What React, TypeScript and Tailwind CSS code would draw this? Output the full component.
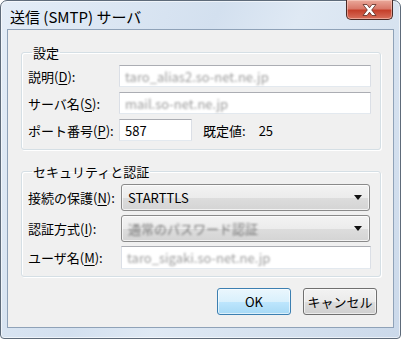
import React from 'react';

function Key({ text, k }: { text: string; k: string }) {
  return (
    <span className="whitespace-nowrap">
      {text}(<span className="underline underline-offset-[2px]">{k}</span>):
    </span>
  );
}

function TextBox({ value, width, height = 'h-[22px]', blur = true }: { value: string; width: string; height?: string; blur?: boolean }) {
  return (
    <div
      className={`${width} ${height} flex items-center bg-white border border-t-[#abadb3] border-x-[#dbdfe6] border-b-[#e3e9ef] px-[5px]`}
    >
      <span className={blur ? 'text-[#9c9c9c] blur-[1.1px] whitespace-nowrap' : 'text-black whitespace-nowrap'}>{value}</span>
    </div>
  );
}

function ComboBox({ value, blur = false }: { value: string; blur?: boolean }) {
  return (
    <div className="w-[249px] h-[27px] flex items-center justify-between rounded-[3px] border border-[#8a8a8a] bg-[linear-gradient(#f3f3f3_0%,#ececec_50%,#dddddd_51%,#d4d4d4_100%)] shadow-[inset_0_0_0_1px_rgba(255,255,255,0.7)] pl-[6px] pr-[7px]">
      <span className={blur ? 'text-[#7a7a7a] blur-[1.1px] whitespace-nowrap' : 'text-black whitespace-nowrap'}>{value}</span>
      <svg width="8" height="5" viewBox="0 0 8 5">
        <path d="M0 0 H8 L4 5 Z" fill="#111" />
      </svg>
    </div>
  );
}

export default function App() {
  return (
    <div className="w-[401px] h-[339px] bg-white font-['Noto_Sans_CJK_JP',sans-serif] text-[13px] text-black leading-none">
      <div className="w-[401px] h-[339px] flex flex-col rounded-t-[7px] rounded-b-[4px] border border-[#5e6b7a] bg-[linear-gradient(115deg,#e4edf7_0%,#d3e0ef_40%,#dfe9f4_55%,#cbd9ea_100%)] shadow-[inset_0_0_0_1px_rgba(255,255,255,0.6)]">
        {/* title bar */}
        <div className="h-[28px] flex items-start justify-between pl-[9px] pr-[7px]">
          <div className="pt-[8px] text-[15px] text-black whitespace-nowrap">送信 (SMTP) サーバ</div>
          <div className="w-[47px] h-[20px] -mt-px flex items-center justify-center rounded-b-[5px] border border-[#4a2a25] border-t-0 bg-[linear-gradient(#eaa99b_0%,#d9796a_45%,#c5402b_55%,#d8705c_100%)] shadow-[inset_0_0_0_1px_rgba(255,220,210,0.5)]">
            <svg width="15" height="12" viewBox="0 0 15 12">
              <path
                d="M1 0.5 H5 L7.5 3.8 L10 0.5 H14 L9.7 6 L14 11.5 H10 L7.5 8.2 L5 11.5 H1 L5.3 6 Z"
                fill="#ffffff"
                stroke="#5a2a22"
                strokeWidth="0.8"
              />
            </svg>
          </div>
        </div>

        {/* client area */}
        <div className="mx-[6px] mb-[10px] flex-1 border border-[#8fa2b8] bg-[#f0f0f0] flex flex-col pl-[13px] pr-[12px] pt-[16px]">
          <fieldset className="border border-[#d5dfe5] rounded-[3px] shadow-[inset_1px_1px_0_#ffffff,1px_1px_0_#ffffff] pl-[6px] pr-[7px] pt-[6px] pb-[8px]">
            <legend className="ml-[4px] px-[1px]">設定</legend>
            <div className="flex flex-col gap-[5px]">
              <div className="flex items-center">
                <div className="w-[91px]"><Key text="説明" k="D" /></div>
                <TextBox width="w-[252px]" value="taro_alias2.so-net.ne.jp" />
              </div>
              <div className="flex items-center">
                <div className="w-[91px]"><Key text="サーバ名" k="S" /></div>
                <TextBox width="w-[252px]" value="mail.so-net.ne.jp" />
              </div>
              <div className="flex items-center">
                <div className="w-[91px]"><Key text="ポート番号" k="P" /></div>
                <TextBox width="w-[73px]" value="587" blur={false} />
                <span className="ml-[11px]">既定値:</span>
                <span className="ml-[13px]">25</span>
              </div>
            </div>
          </fieldset>

          <fieldset className="mt-[15px] border border-[#d5dfe5] rounded-[3px] shadow-[inset_1px_1px_0_#ffffff,1px_1px_0_#ffffff] pl-[6px] pr-[7px] pt-[6px] pb-[7px]">
            <legend className="ml-[4px] px-[1px]">セキュリティと認証</legend>
            <div className="flex flex-col gap-[4px]">
              <div className="flex items-center">
                <div className="w-[93px]"><Key text="接続の保護" k="N" /></div>
                <ComboBox value="STARTTLS" />
              </div>
              <div className="flex items-center">
                <div className="w-[93px]"><Key text="認証方式" k="I" /></div>
                <ComboBox value="通常のパスワード認証" blur />
              </div>
              <div className="flex items-center">
                <div className="w-[93px]"><Key text="ユーザ名" k="M" /></div>
                <TextBox width="w-[250px]" height="h-[23px]" value="taro_sigaki.so-net.ne.jp" />
              </div>
            </div>
          </fieldset>

          <div className="mt-[11px] flex justify-end gap-[12px] pr-[4px]">
            <button className="w-[74px] h-[27px] rounded-[3px] border border-[#3c7fb1] bg-[linear-gradient(#eaf6fd_0%,#d9f0fc_50%,#bee6fd_51%,#a7d9f5_100%)] shadow-[inset_0_0_0_1px_rgba(255,255,255,0.6)] text-black">
              OK
            </button>
            <button className="w-[74px] h-[27px] rounded-[3px] border border-[#707070] bg-[linear-gradient(#f2f2f2_0%,#ebebeb_50%,#dddddd_51%,#cfcfcf_100%)] shadow-[inset_0_0_0_1px_rgba(255,255,255,0.6)] text-black">
              キャンセル
            </button>
          </div>
        </div>
      </div>
    </div>
  );
}
